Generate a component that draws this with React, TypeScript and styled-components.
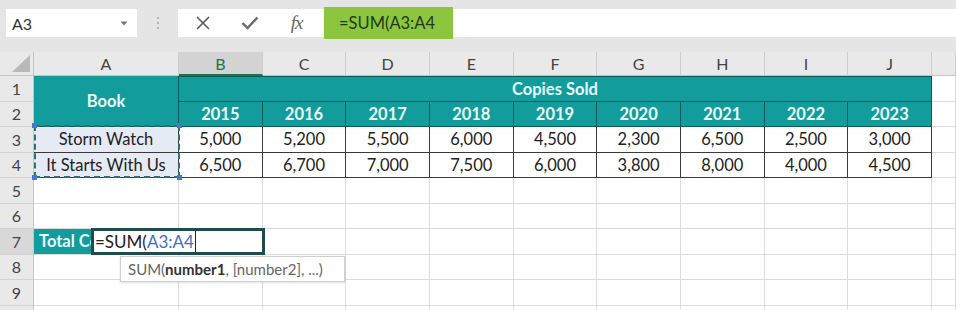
import React from 'react';
import styled, { createGlobalStyle, css } from 'styled-components';

const GlobalStyle = createGlobalStyle`
  html, body {
    margin: 0;
    padding: 0;
    background: #ffffff;
    overflow: hidden;
  }
  body {
    font-family: Lato, "Liberation Sans", sans-serif;
    color: #222;
  }
`;

const TEAL = '#129c9c';
const TEAL_LINE = '#0c5a5a';
const GRID = '#dcdcdc';
const INK = '#3a3a3a';

const Page = styled.div`
  width: 956px;
  height: 310px;
  overflow: hidden;
  display: flex;
  flex-direction: column;
`;

const FormulaBar = styled.div`
  height: 52px;
  flex: none;
  box-sizing: border-box;
  background: #e5e5e5;
  display: flex;
  align-items: flex-start;
  padding: 9px 0 0 6px;
`;

const NameBox = styled.div`
  width: 131px;
  height: 28px;
  background: #fff;
  display: flex;
  align-items: center;
  justify-content: space-between;
  box-sizing: border-box;
  padding: 0 9px 0 6px;
  font-size: 16px;
  color: #333;
`;

const Grip = styled.div`
  width: 41px;
  height: 28px;
  display: flex;
  flex-direction: column;
  align-items: center;
  justify-content: center;
  gap: 3px;
`;

const GripDot = styled.span`
  width: 2px;
  height: 2px;
  border-radius: 1px;
  background: #a3a3a3;
`;

const FormulaInput = styled.div`
  flex: 1;
  height: 28px;
  background: #fff;
  display: flex;
  align-items: center;
`;

const IconGroup = styled.div`
  width: 146px;
  display: flex;
  align-items: center;
  justify-content: space-around;
  padding: 0 4px 0 2px;
  box-sizing: border-box;
`;

const IconSlot = styled.span`
  width: 24px;
  height: 20px;
  display: flex;
  align-items: center;
  justify-content: center;
`;

const Fx = styled.span`
  font-family: "Liberation Serif", serif;
  font-style: italic;
  font-size: 19px;
  color: #666;
  letter-spacing: -1px;
`;

const FormulaText = styled.div`
  width: 129px;
  height: 32px;
  margin-top: -1px;
  background: #8cc63e;
  box-sizing: border-box;
  padding-left: 15px;
  display: flex;
  align-items: center;
  font-size: 16.5px;
  color: #1f3a1a;
`;

const Sheet = styled.div`
  position: relative;
  display: grid;
  grid-template-columns: 34px 145px repeat(9, 83.67px) 1fr;
  grid-template-rows: 24px repeat(10, 25.5px);
  font-size: 16.5px;
`;

const Corner = styled.div`
  background: #e9e9e9;
  border-right: 1px solid #c4c4c4;
  border-bottom: 1px solid #c4c4c4;
  box-sizing: border-box;
  position: relative;
  &::after {
    content: '';
    position: absolute;
    right: 3px;
    bottom: 3px;
    width: 18px;
    height: 17px;
    background: #b9b9b9;
    clip-path: polygon(100% 0, 100% 100%, 0 100%);
  }
`;

const ColHeader = styled.div<{ $active?: boolean }>`
  background: ${p => (p.$active ? '#d3d3d3' : '#e9e9e9')};
  color: ${p => (p.$active ? '#217346' : '#444')};
  border-right: 1px solid #cdcdcd;
  border-bottom: ${p => (p.$active ? '2px solid #217346' : '1px solid #c4c4c4')};
  box-sizing: border-box;
  display: flex;
  align-items: center;
  justify-content: center;
  font-size: 16px;
`;

const RowHeader = styled.div<{ $row: number; $active?: boolean }>`
  grid-column: 1;
  grid-row: ${p => p.$row};
  background: ${p => (p.$active ? '#d8d8d8' : '#e9e9e9')};
  color: #444;
  border-right: 1px solid #c4c4c4;
  border-bottom: 1px solid #d2d2d2;
  box-sizing: border-box;
  display: flex;
  align-items: center;
  justify-content: center;
  font-size: 16px;
`;

type Variant = 'grid' | 'head' | 'data' | 'label' | 'total';

const Cell = styled.div<{
  $col: number;
  $row: number;
  $colSpan?: number;
  $rowSpan?: number;
  $variant: Variant;
  $topLine?: boolean;
}>`
  grid-column: ${p => p.$col} / span ${p => p.$colSpan || 1};
  grid-row: ${p => p.$row} / span ${p => p.$rowSpan || 1};
  box-sizing: border-box;
  display: flex;
  align-items: center;
  justify-content: center;
  white-space: nowrap;
  overflow: hidden;
  border-right: 1px solid ${GRID};
  border-bottom: 1px solid ${GRID};
  background: #fff;

  ${p =>
    (p.$variant === 'head' || p.$variant === 'total') &&
    css`
      background: ${TEAL};
      color: #eafcfc;
      font-weight: 700;
      border-color: ${TEAL_LINE};
    `}

  ${p =>
    p.$variant === 'total' &&
    css`
      justify-content: flex-start;
      padding-left: 5px;
      border-color: ${GRID};
    `}

  ${p =>
    p.$variant === 'data' &&
    css`
      color: #222;
      border-color: ${INK};
    `}

  ${p =>
    p.$variant === 'label' &&
    css`
      color: #222;
      background: #e6eaf4;
      border-color: ${INK};
    `}

  ${p => p.$topLine && css`border-top: 1px solid ${TEAL_LINE};`}
`;

/* the label runs under the in-cell editor, so only its start is visible */
const TotalLabel = styled.span`
  display: block;
  max-width: 52px;
  overflow: hidden;
  white-space: nowrap;
`;

const RangeMark = styled.div`
  position: absolute;
  left: 34px;
  top: 73px;
  width: 146px;
  height: 53px;
  box-sizing: border-box;
  border: 2px dashed #2f7070;
  pointer-events: none;
`;

const Handle = styled.span<{ $x: 'left' | 'right'; $y: 'top' | 'bottom' }>`
  position: absolute;
  width: 5px;
  height: 5px;
  background: #4a78c8;
  ${p => p.$x}: -4px;
  ${p => p.$y}: -4px;
`;

const EditBox = styled.div`
  position: absolute;
  left: 91px;
  top: 176px;
  width: 174px;
  height: 27px;
  box-sizing: border-box;
  border: 3px solid #1e4c4c;
  background: #fff;
  display: flex;
  align-items: center;
  padding-left: 1px;
  font-size: 17px;
  color: #222;
`;

const RefText = styled.span`
  color: #3f6fc2;
`;

const Caret = styled.span`
  width: 1.5px;
  height: 21px;
  background: #222;
  margin-left: 1px;
`;

const Tooltip = styled.div`
  position: absolute;
  left: 120px;
  top: 204px;
  width: 225px;
  height: 26px;
  box-sizing: border-box;
  background: #fff;
  border: 1px solid #cfcfcf;
  box-shadow: 0 1px 2px rgba(0, 0, 0, 0.12);
  display: flex;
  align-items: center;
  padding-left: 7px;
  font-size: 15px;
  color: #666;
  white-space: nowrap;
`;

const Strong = styled.b`
  color: #333;
  font-weight: 700;
`;

const COLS = ['A', 'B', 'C', 'D', 'E', 'F', 'G', 'H', 'I', 'J', 'K'];
const YEARS = [2015, 2016, 2017, 2018, 2019, 2020, 2021, 2022, 2023];
const BOOKS = [
  { title: 'Storm Watch', sold: ['5,000', '5,200', '5,500', '6,000', '4,500', '2,300', '6,500', '2,500', '3,000'] },
  { title: 'It Starts With Us', sold: ['6,500', '6,700', '7,000', '7,500', '6,000', '3,800', '8,000', '4,000', '4,500'] },
];

const App: React.FC = () => {
  const cells: React.ReactNode[] = [];
  // grid rows: 1 = column headers, sheet row r sits on grid row r + 1
  for (let r = 1; r <= 10; r++) {
    const gr = r + 1;
    cells.push(
      <RowHeader key={`rh${r}`} $row={gr} $active={r === 7}>
        {r < 10 ? r : ''}
      </RowHeader>
    );
    if (r === 1) {
      cells.push(
        <Cell key="book" $col={2} $row={gr} $rowSpan={2} $variant="head">Book</Cell>,
        <Cell key="sold" $col={3} $row={gr} $colSpan={9} $variant="head" $topLine>Copies Sold</Cell>,
        <Cell key="k1" $col={12} $row={gr} $variant="grid" />
      );
      continue;
    }
    if (r === 2) {
      YEARS.forEach((y, i) =>
        cells.push(<Cell key={`y${y}`} $col={i + 3} $row={gr} $variant="head">{y}</Cell>)
      );
      cells.push(<Cell key="k2" $col={12} $row={gr} $variant="grid" />);
      continue;
    }
    if (r === 3 || r === 4) {
      const book = BOOKS[r - 3];
      cells.push(<Cell key={`t${r}`} $col={2} $row={gr} $variant="label">{book.title}</Cell>);
      book.sold.forEach((v, i) =>
        cells.push(<Cell key={`v${r}-${i}`} $col={i + 3} $row={gr} $variant="data">{v}</Cell>)
      );
      cells.push(<Cell key={`k${r}`} $col={12} $row={gr} $variant="grid" />);
      continue;
    }
    COLS.forEach((c, i) => {
      if (r === 7 && c === 'A') {
        cells.push(
          <Cell key="total" $col={2} $row={gr} $variant="total">
            <TotalLabel>Total Copies Sold</TotalLabel>
          </Cell>
        );
      } else {
        cells.push(<Cell key={`${c}${r}`} $col={i + 2} $row={gr} $variant="grid" />);
      }
    });
  }

  return (
    <Page>
      <GlobalStyle />
      <FormulaBar>
        <NameBox>
          A3
          <svg width="8" height="5" viewBox="0 0 8 5">
            <path d="M0.5 0.5 L7.5 0.5 L4 4.5 Z" fill="#777" />
          </svg>
        </NameBox>
        <Grip>
          <GripDot />
          <GripDot />
          <GripDot />
        </Grip>
        <FormulaInput>
          <IconGroup>
            <IconSlot>
              <svg width="14" height="14" viewBox="0 0 14 14">
                <path d="M1 1 L13 13 M13 1 L1 13" stroke="#5a5a5a" strokeWidth="1.6" fill="none" />
              </svg>
            </IconSlot>
            <IconSlot>
              <svg width="18" height="14" viewBox="0 0 18 14">
                <path d="M1.5 7 L6.5 12 L16.5 1.5" stroke="#6a6a6a" strokeWidth="2.4" fill="none" />
              </svg>
            </IconSlot>
            <IconSlot>
              <Fx>fx</Fx>
            </IconSlot>
          </IconGroup>
          <FormulaText>=SUM(A3:A4</FormulaText>
        </FormulaInput>
      </FormulaBar>

      <Sheet>
        <Corner />
        {COLS.map(c => (
          <ColHeader key={c} $active={c === 'B'}>
            {c === 'K' ? '' : c}
          </ColHeader>
        ))}
        {cells}

        <RangeMark>
          <Handle $x="left" $y="top" />
          <Handle $x="right" $y="top" />
          <Handle $x="left" $y="bottom" />
          <Handle $x="right" $y="bottom" />
        </RangeMark>

        <EditBox>
          =SUM(<RefText>A3:A4</RefText>
          <Caret />
        </EditBox>

        <Tooltip>
          SUM(<Strong>number1</Strong>, [number2], ...)
        </Tooltip>
      </Sheet>
    </Page>
  );
};

export default App;
